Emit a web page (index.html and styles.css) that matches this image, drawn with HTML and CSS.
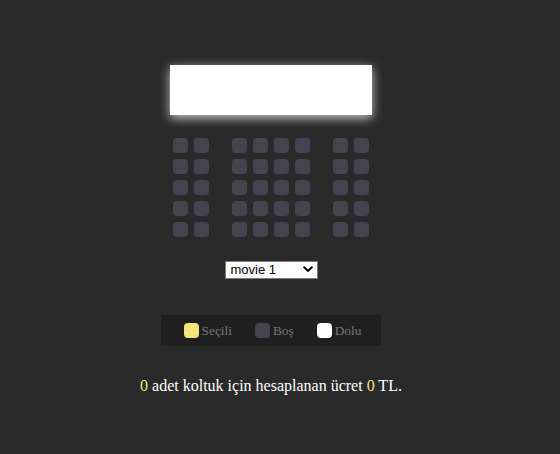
FILE: index.html
```html
<!DOCTYPE html>
<html lang="tr">
<head>
<meta charset="utf-8">
<title>Sinema</title>
<link rel="stylesheet" href="styles.css">
</head>
<body>
<main class="page">
  <section class="hall">
    <div class="screen"></div>
    <div class="row"><span class="seat"></span><span class="seat"></span><span class="seat"></span><span class="seat"></span><span class="seat"></span><span class="seat"></span><span class="seat"></span><span class="seat"></span></div>
    <div class="row"><span class="seat"></span><span class="seat"></span><span class="seat"></span><span class="seat"></span><span class="seat"></span><span class="seat"></span><span class="seat"></span><span class="seat"></span></div>
    <div class="row"><span class="seat"></span><span class="seat"></span><span class="seat"></span><span class="seat"></span><span class="seat"></span><span class="seat"></span><span class="seat"></span><span class="seat"></span></div>
    <div class="row"><span class="seat"></span><span class="seat"></span><span class="seat"></span><span class="seat"></span><span class="seat"></span><span class="seat"></span><span class="seat"></span><span class="seat"></span></div>
    <div class="row"><span class="seat"></span><span class="seat"></span><span class="seat"></span><span class="seat"></span><span class="seat"></span><span class="seat"></span><span class="seat"></span><span class="seat"></span></div>
  </section>
  <div class="picker">
    <select class="movie">
      <option>movie 1</option>
      <option>movie 2</option>
      <option>movie 3</option>
    </select>
    <svg class="chev" width="10" height="7" viewBox="0 0 10 7"><path d="M1.2 1.2 L5 5 L8.8 1.2" fill="none" stroke="#000" stroke-width="2" stroke-linecap="round" stroke-linejoin="round"/></svg>
  </div>
  <ul class="showcase">
    <li><span class="seat selected"></span><small>Seçili</small></li>
    <li><span class="seat"></span><small>Boş</small></li>
    <li><span class="seat occupied"></span><small>Dolu</small></li>
  </ul>
  <p class="text"><span class="num">0</span> adet koltuk için hesaplanan ücret <span class="num">0</span> TL.</p>
</main>
</body>
</html>
```
FILE: styles.css
```css
html, body {
  margin: 0;
  padding: 0;
  background: #2a2a2a;
}
body {
  padding-right: 18px;
  font-family: "Liberation Serif", "Times New Roman", serif;
  color: #fff;
}
.page {
  display: flex;
  flex-direction: column;
  align-items: center;
  padding-top: 65px;
}
.hall {
  width: 202px;
  display: flex;
  flex-direction: column;
}
.screen {
  height: 50px;
  background: #fff;
  box-shadow: 0 3px 10px rgba(255, 255, 255, 0.75);
  margin-bottom: 20px;
}
.row {
  display: flex;
}
.seat {
  display: block;
  width: 15px;
  height: 15px;
  margin: 3px;
  background: #444451;
  border-radius: 4px;
  flex: none;
}
.row .seat:nth-of-type(2) { margin-right: 20px; }
.row .seat:nth-last-of-type(2) { margin-left: 20px; }
.seat.selected { background: #f4e67a; }
.seat.occupied { background: #fff; }

.picker {
  position: relative;
  margin-top: 20px;
  width: 93px;
  height: 18px;
}
.movie {
  appearance: none;
  -webkit-appearance: none;
  box-sizing: border-box;
  width: 93px;
  height: 18px;
  margin: 0;
  padding: 0 0 0 5px;
  border: 1px solid #7a7a7a;
  border-radius: 0;
  background: #fff;
  color: #000;
  font-family: "Liberation Sans", Arial, sans-serif;
  font-size: 13px;
  line-height: 16px;
}
.chev {
  position: absolute;
  right: 5px;
  top: 6px;
  pointer-events: none;
}
.showcase {
  display: flex;
  margin: 37px 0 0;
  padding: 5px 10px;
  background: #1f1f1f;
  list-style: none;
  color: #777;
}
.showcase li {
  display: flex;
  align-items: center;
  margin: 0 10px;
}
.showcase small {
  font-size: 13.33px;
}
.text {
  margin: 31px 0 0;
  font-size: 16px;
}
.num {
  color: #f4e67a;
}
```
